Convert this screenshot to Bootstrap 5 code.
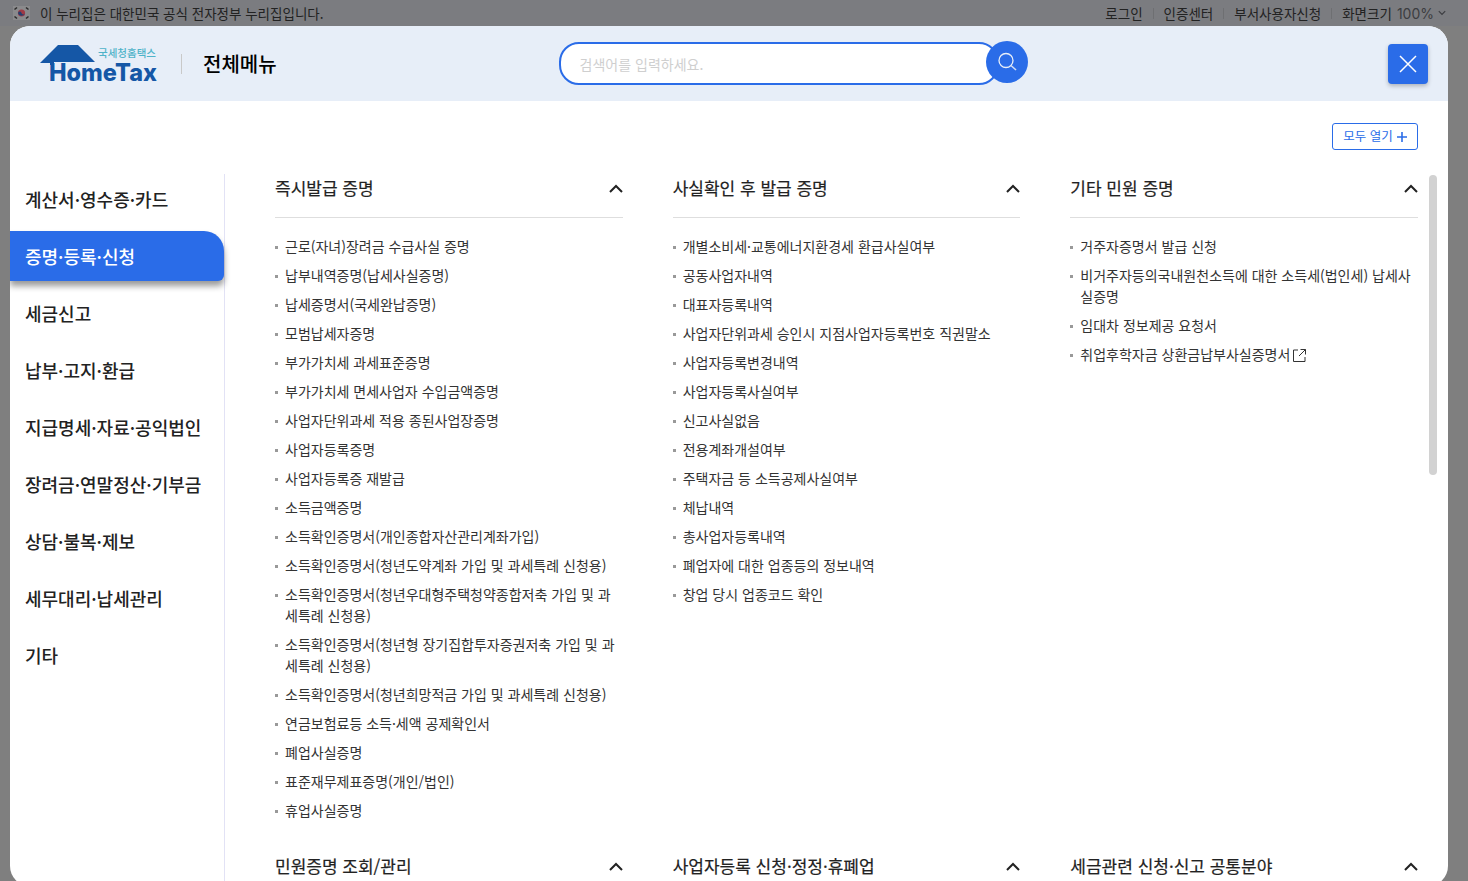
<!DOCTYPE html>
<html lang="ko">
<head>
  <meta charset="UTF-8" />
  <title>전체메뉴</title>
  <link href="https://cdn.jsdelivr.net/npm/bootstrap@5.3.0/dist/css/bootstrap.min.css" rel="stylesheet" />
  <style>
    html, body { height: 100%; overflow: hidden; }
    body { background: #7f7f7f; font-family: "Noto Sans CJK KR", "Noto Sans", sans-serif; font-size: 14px; color: #333; }
    .gov-bar { height: 26px; background: #7b7c80; color: #222; font-size: 13.5px; padding: 0 22px 0 13px; }
    .gov-flag { width: 17px; height: 14px; margin-right: 10px; }
    .gov-links { gap: 20px; }
    .gov-links > span + span { position: relative; }
    .gov-sep { width: 1px; height: 11px; background: #6e6f72; margin: 0 -10px; }
    .gov-size { color: #3c3d40; font-family: "Inter", sans-serif; font-size: 14px; margin-left: 5px; }
    .menu-modal { margin: 0 20px 0 10px; height: 860px; background: #fff; border-radius: 20px; overflow: hidden; position: relative; }
    .menu-head { height: 75px; background: #e7eef8; padding: 0 20px 0 30px; }
    .logo-box { width: 117px; height: 38px; }
    .head-sep { width: 1px; height: 20px; background: #c9c9c9; margin: 0 21px 0 24px; }
    .head-title { font-size: 20px; font-weight: 500; color: #000; margin: 0; }
    .search-box { width: 440px; margin-left: 282px; position: relative; }
    .search-input { height: 43px; border: 2px solid #2a6ce8; border-radius: 20px; padding: 0 19px; font-size: 14px; box-shadow: none; }
    .search-input::placeholder { color: #cfcfcf; }
    .search-btn { position: absolute; left: 427px; top: -1px; width: 42px; height: 42px; border-radius: 50%; background: #2a6ce8; border: 0; padding: 0; }
    .close-btn { width: 40px; height: 40px; background: #2a6ce8; border: 0; border-radius: 4px; padding: 0; box-shadow: 0 2px 4px rgba(0,0,0,.25); }
    .tool-row { height: 73px; padding: 22px 30px 0 0; }
    .open-all { width: 86px; height: 27px; border: 1px solid #2a6ce8; border-radius: 3px; background: #fff; color: #2a6ce8; font-size: 12.5px; padding: 0; }
    .menu-main { height: 712px; }
    .side-menu { width: 215px; border-right: 1px solid #e2e2f5; flex: none; }
    .side-item { height: 50px; margin-bottom: 7px; padding-left: 15px; font-size: 18px; font-weight: 500; color: #222; line-height: 50px; margin-right: -1px; }
    .side-item.on { background: #2a6ce8; color: #fff; border-radius: 0 20px 6px 0; box-shadow: 0 5px 6px rgba(0,0,0,.4); width: 214px; }
    .menu-grid { display: grid; grid-template-columns: repeat(3, 1fr); column-gap: 50px; padding: 0 30px 0 50px; flex: 1; align-content: start; }
    .sec-head { height: 44px; border-bottom: 1px solid #dedede; padding-bottom: 15px; }
    .sec-title { font-size: 17px; line-height: 28px; font-weight: 400; color: #222; margin: 0; -webkit-text-stroke: .2px #222; }
    .sec-list { margin: 18px 0 31px; padding: 0; list-style: none; }
    .sec-list li { display: flex; line-height: 21px; margin-bottom: 8px; color: #333; }
    .sec-list li::before { content: ""; flex: none; width: 3px; height: 3px; background: #999; margin: 10px 7px 0 0; }
    .ext-icon { vertical-align: -3px; margin-left: 2px; }
    .fake-scroll { position: absolute; left: 1419px; top: 149px; width: 8px; height: 300px; background: #d2d2d2; border-radius: 4px; }
  </style>
</head>
<body>
  <!-- top strip behind the modal -->
  <div class="gov-bar d-flex align-items-center">
    <svg class="gov-flag" viewBox="0 0 17 14">
      <rect width="17" height="14" fill="#8a8a8c"/>
      <circle cx="8.5" cy="7" r="3.6" fill="#a03a45"/>
      <path d="M5 7a3.6 3.6 0 0 0 7 0a1.8 1.8 0 0 1-3.5 0a1.8 1.8 0 0 0-3.5 0z" fill="#24406f"/>
      <path d="M1.5 3.5l2.5-2M1.5 10.5l2.5 2M15.5 3.5l-2.5-2M15.5 10.5l-2.5 2" stroke="#2b2b2b" stroke-width="1.6"/>
    </svg>
    <span>이 누리집은 대한민국 공식 전자정부 누리집입니다.</span>
    <div class="gov-links d-flex align-items-center ms-auto">
      <span>로그인</span><i class="gov-sep"></i>
      <span>인증센터</span><i class="gov-sep"></i>
      <span>부서사용자신청</span><i class="gov-sep"></i>
      <div class="d-flex align-items-center">
        <span>화면크기</span><span class="gov-size">100%</span>
        <svg class="ms-1" width="8" height="6" viewBox="0 0 8 6"><path d="M.8 1.2L4 4.4l3.2-3.2" fill="none" stroke="#3c3d40" stroke-width="1.2"/></svg>
      </div>
    </div>
  </div>

  <div class="menu-modal">
    <div class="menu-head d-flex align-items-center">
      <svg class="logo-box" viewBox="0 0 117 38">
        <path d="M0 18L18 0H38L55 17H14V20H10V18z" fill="#1557a6"/>
        <text x="58" y="12" font-size="10.5" fill="#4fb3c9" font-family="Noto Sans CJK KR, sans-serif" font-weight="500">국세청홈택스</text>
        <text x="9" y="36" font-size="24" fill="#1557a6" font-family="Inter, sans-serif" font-weight="800" textLength="108" lengthAdjust="spacingAndGlyphs">HomeTax</text>
      </svg>
      <i class="head-sep"></i>
      <h1 class="head-title">전체메뉴</h1>
      <div class="search-box">
        <input type="text" class="form-control search-input" placeholder="검색어를 입력하세요." />
        <button type="button" class="search-btn d-flex align-items-center justify-content-center">
          <svg width="22" height="22" viewBox="0 0 22 22"><circle cx="10" cy="9.5" r="7" fill="none" stroke="#e7eef8" stroke-width="1.3"/><path d="M15 14.5l5 4.5" stroke="#cfdcf5" stroke-width="1.6"/></svg>
        </button>
      </div>
      <button type="button" class="close-btn ms-auto d-flex align-items-center justify-content-center">
        <svg width="18" height="18" viewBox="0 0 18 18"><path d="M1 1l16 16M17 1L1 17" stroke="#fff" stroke-width="1.5"/></svg>
      </button>
    </div>

    <div class="tool-row d-flex justify-content-end align-items-start">
      <button type="button" class="open-all d-flex align-items-center justify-content-center gap-1">모두 열기
        <svg width="10" height="10" viewBox="0 0 10 10"><path d="M5 0v10M0 5h10" stroke="#2a6ce8" stroke-width="1.6"/></svg>
      </button>
    </div>

    <div class="menu-main d-flex">
      <div class="side-menu" id="sideMenu"></div>
      <div class="menu-grid" id="menuGrid"></div>
    </div>
    <div class="fake-scroll"></div>
  </div>

  <script>
    const sideItems = ['계산서·영수증·카드', '증명·등록·신청', '세금신고', '납부·고지·환급', '지급명세·자료·공익법인', '장려금·연말정산·기부금', '상담·불복·제보', '세무대리·납세관리', '기타'];

    const sections = [
      { title: '즉시발급 증명', items: ['근로(자녀)장려금 수급사실 증명', '납부내역증명(납세사실증명)', '납세증명서(국세완납증명)', '모범납세자증명', '부가가치세 과세표준증명', '부가가치세 면세사업자 수입금액증명', '사업자단위과세 적용 종된사업장증명', '사업자등록증명', '사업자등록증 재발급', '소득금액증명', '소득확인증명서(개인종합자산관리계좌가입)', '소득확인증명서(청년도약계좌 가입 및 과세특례 신청용)', '소득확인증명서(청년우대형주택청약종합저축 가입 및 과세특례 신청용)', '소득확인증명서(청년형 장기집합투자증권저축 가입 및 과세특례 신청용)', '소득확인증명서(청년희망적금 가입 및 과세특례 신청용)', '연금보험료등 소득·세액 공제확인서', '폐업사실증명', '표준재무제표증명(개인/법인)', '휴업사실증명'] },
      { title: '사실확인 후 발급 증명', items: ['개별소비세·교통에너지환경세 환급사실여부', '공동사업자내역', '대표자등록내역', '사업자단위과세 승인시 지점사업자등록번호 직권말소', '사업자등록변경내역', '사업자등록사실여부', '신고사실없음', '전용계좌개설여부', '주택자금 등 소득공제사실여부', '체납내역', '총사업자등록내역', '폐업자에 대한 업종등의 정보내역', '창업 당시 업종코드 확인'] },
      { title: '기타 민원 증명', items: ['거주자증명서 발급 신청', '비거주자등의국내원천소득에 대한 소득세(법인세) 납세사실증명', '임대차 정보제공 요청서', '취업후학자금 상환금납부사실증명서<svg class="ext-icon" width="15" height="15" viewBox="0 0 15 15"><path d="M6 2H1.5v11.5H13V9M8.5 1.500H13.500V6.500M13.500 1.500L7 8" fill="none" stroke="#333" stroke-width="1"/></svg>'] },
      { title: '민원증명 조회/관리', items: [] },
      { title: '사업자등록 신청·정정·휴폐업', items: [] },
      { title: '세금관련 신청·신고 공통분야', items: [] }
    ];

    document.getElementById('sideMenu').innerHTML = sideItems
      .map((name, i) => `<div class="side-item${i === 1 ? ' on' : ''}">${name}</div>`).join('');

    document.getElementById('menuGrid').innerHTML = sections.map(sec => `
      <section>
        <div class="sec-head d-flex justify-content-between align-items-center">
          <h2 class="sec-title">${sec.title}</h2>
          <svg width="14" height="9" viewBox="0 0 14 9"><path d="M1 8l6-6 6 6" fill="none" stroke="#222" stroke-width="2"/></svg>
        </div>
        <ul class="sec-list">${sec.items.map(item => `<li><span>${item}</span></li>`).join('')}</ul>
      </section>`).join('');
  </script>
  <script src="https://cdn.jsdelivr.net/npm/bootstrap@5.3.0/dist/js/bootstrap.bundle.min.js"></script>
</body>
</html>
